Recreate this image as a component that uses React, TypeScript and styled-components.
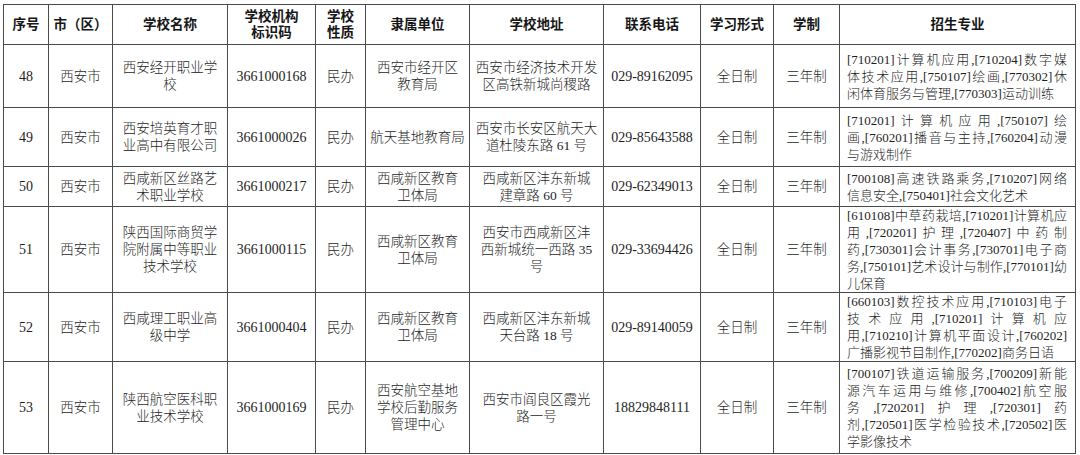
import styled, { createGlobalStyle } from "styled-components";

const GlobalStyle = createGlobalStyle`
  html, body {
    margin: 0;
    padding: 0;
    background: #ffffff;
  }
  body {
    font-family: "Liberation Serif", "Noto Sans CJK SC", serif;
    color: #1c1c1c;
  }
`;

type Row = {
  no: string;
  city: string;
  name: string[];
  code: string;
  kind: string;
  owner: string[];
  address: string[];
  phone: string;
  mode: string;
  years: string;
  majors: string[];
};

const columns = [45, 64, 115, 88, 50, 104, 134, 97, 73, 66, 236];
const rowHeights = [63, 59, 40, 85, 69, 92];

const rows: Row[] = [
  {
    no: "48",
    city: "西安市",
    name: ["西安经开职业学", "校"],
    code: "3661000168",
    kind: "民办",
    owner: ["西安市经开区", "教育局"],
    address: ["西安市经济技术开发", "区高铁新城尚稷路"],
    phone: "029-89162095",
    mode: "全日制",
    years: "三年制",
    majors: [
      "[710201]计算机应用,[710204]数字媒",
      "体技术应用,[750107]绘画,[770302]休",
      "闲体育服务与管理,[770303]运动训练",
    ],
  },
  {
    no: "49",
    city: "西安市",
    name: ["西安培英育才职", "业高中有限公司"],
    code: "3661000026",
    kind: "民办",
    owner: ["航天基地教育局"],
    address: ["西安市长安区航天大", "道杜陵东路 61 号"],
    phone: "029-85643588",
    mode: "全日制",
    years: "三年制",
    majors: [
      "[710201]计算机应用,[750107]绘",
      "画,[760201]播音与主持,[760204]动漫",
      "与游戏制作",
    ],
  },
  {
    no: "50",
    city: "西安市",
    name: ["西咸新区丝路艺", "术职业学校"],
    code: "3661000217",
    kind: "民办",
    owner: ["西咸新区教育", "卫体局"],
    address: ["西咸新区沣东新城", "建章路 60 号"],
    phone: "029-62349013",
    mode: "全日制",
    years: "三年制",
    majors: [
      "[700108]高速铁路乘务,[710207]网络",
      "信息安全,[750401]社会文化艺术",
    ],
  },
  {
    no: "51",
    city: "西安市",
    name: ["陕西国际商贸学", "院附属中等职业", "技术学校"],
    code: "3661000115",
    kind: "民办",
    owner: ["西咸新区教育", "卫体局"],
    address: ["西安市西咸新区沣", "西新城统一西路 35", "号"],
    phone: "029-33694426",
    mode: "全日制",
    years: "三年制",
    majors: [
      "[610108]中草药栽培,[710201]计算机应",
      "用,[720201]护理,[720407]中药制",
      "药,[730301]会计事务,[730701]电子商",
      "务,[750101]艺术设计与制作,[770101]幼",
      "儿保育",
    ],
  },
  {
    no: "52",
    city: "西安市",
    name: ["西咸理工职业高", "级中学"],
    code: "3661000404",
    kind: "民办",
    owner: ["西咸新区教育", "卫体局"],
    address: ["西咸新区沣东新城", "天台路 18 号"],
    phone: "029-89140059",
    mode: "全日制",
    years: "三年制",
    majors: [
      "[660103]数控技术应用,[710103]电子",
      "技术应用,[710201]计算机应",
      "用,[710210]计算机平面设计,[760202]",
      "广播影视节目制作,[770202]商务日语",
    ],
  },
  {
    no: "53",
    city: "西安市",
    name: ["陕西航空医科职", "业技术学校"],
    code: "3661000169",
    kind: "民办",
    owner: ["西安航空基地", "学校后勤服务", "管理中心"],
    address: ["西安市阎良区霞光", "路一号"],
    phone: "18829848111",
    mode: "全日制",
    years: "三年制",
    majors: [
      "[700107]铁道运输服务,[700209]新能",
      "源汽车运用与维修,[700402]航空服",
      "务,[720201]护理,[720301]药",
      "剂,[720501]医学检验技术,[720502]医",
      "学影像技术",
    ],
  },
];

const headers: string[][] = [
  ["序号"],
  ["市（区）"],
  ["学校名称"],
  ["学校机构", "标识码"],
  ["学校", "性质"],
  ["隶属单位"],
  ["学校地址"],
  ["联系电话"],
  ["学习形式"],
  ["学制"],
  ["招生专业"],
];

const Page = styled.div`
  padding: 4px 5px 0 3px;
`;

const Table = styled.table`
  width: 1072px;
  border-collapse: collapse;
  table-layout: fixed;
  border: 1px solid #3a3a3a;
`;

const HeadCell = styled.th`
  height: 39px;
  padding: 0 3px;
  border: 1px solid #4a4a4a;
  font-size: 13.5px;
  line-height: 16px;
  font-weight: 700;
  text-align: center;
  vertical-align: middle;
  color: #161616;
`;

const Cell = styled.td<{ $digits?: boolean }>`
  padding: 0 3px;
  border: 1px solid #4a4a4a;
  font-size: ${(p) => (p.$digits ? "14px" : "13.5px")};
  line-height: 17px;
  font-weight: 300;
  text-align: center;
  vertical-align: middle;
  color: #1e1e1e;
`;

const MajorCell = styled(Cell)`
  padding: 0 8px 0 7px;
  font-size: 13px;
  text-align: left;
`;

const Line = styled.div`
  white-space: nowrap;
`;

const MajorLine = styled.div<{ $last?: boolean }>`
  white-space: nowrap;
  text-align: justify;
  text-align-last: ${(p) => (p.$last ? "left" : "justify")};
`;

const Lines = ({ items }: { items: string[] }) => (
  <>
    {items.map((t, i) => (
      <Line key={i}>{t}</Line>
    ))}
  </>
);

export default function App() {
  return (
    <Page>
      <GlobalStyle />
      <Table>
        <colgroup>
          {columns.map((w, i) => (
            <col key={i} style={{ width: w }} />
          ))}
        </colgroup>
        <thead>
          <tr>
            {headers.map((h, i) => (
              <HeadCell key={i}>
                <Lines items={h} />
              </HeadCell>
            ))}
          </tr>
        </thead>
        <tbody>
          {rows.map((r, i) => (
            <tr key={r.no} style={{ height: rowHeights[i] }}>
              <Cell $digits>{r.no}</Cell>
              <Cell>{r.city}</Cell>
              <Cell>
                <Lines items={r.name} />
              </Cell>
              <Cell $digits>{r.code}</Cell>
              <Cell>{r.kind}</Cell>
              <Cell>
                <Lines items={r.owner} />
              </Cell>
              <Cell>
                <Lines items={r.address} />
              </Cell>
              <Cell $digits>{r.phone}</Cell>
              <Cell>{r.mode}</Cell>
              <Cell>{r.years}</Cell>
              <MajorCell>
                {r.majors.map((m, j) => (
                  <MajorLine key={j} $last={j === r.majors.length - 1}>
                    {m}
                  </MajorLine>
                ))}
              </MajorCell>
            </tr>
          ))}
        </tbody>
      </Table>
    </Page>
  );
}
